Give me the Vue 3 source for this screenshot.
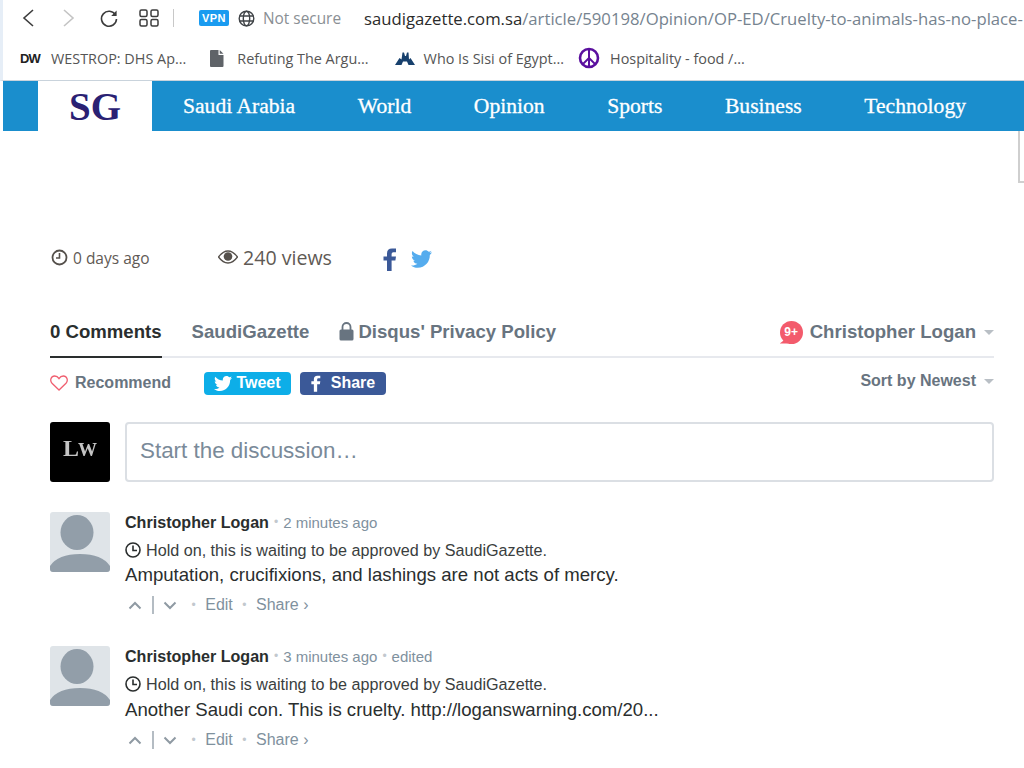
<template>
  <div class="page">
    <div class="toolbar">
      <button class="nav-btn back">
        <svg width="16" height="20" viewBox="0 0 16 20"><path d="M12 2 L3 10 L12 18" fill="none" stroke="#3c3c3c" stroke-width="1.6" /></svg>
      </button>
      <button class="nav-btn forward">
        <svg width="16" height="20" viewBox="0 0 16 20"><path d="M4 2 L13 10 L4 18" fill="none" stroke="#c4c4c4" stroke-width="1.6" /></svg>
      </button>
      <button class="nav-btn reload">
        <svg width="20" height="20" viewBox="0 0 20 20">
          <path d="M16.5 7 A7.5 7.5 0 1 0 17.5 11" fill="none" stroke="#3c3c3c" stroke-width="1.6" />
          <path d="M17.6 2.6 V8 H12.2 Z" fill="#3c3c3c" />
        </svg>
      </button>
      <button class="nav-btn tabs">
        <svg width="20" height="18" viewBox="0 0 20 18" fill="none" stroke="#3c3c3c" stroke-width="1.5">
          <rect x="1" y="1" width="7" height="6.5" rx="1.5" />
          <rect x="12" y="1" width="7" height="6.5" rx="1.5" />
          <rect x="1" y="10.5" width="7" height="6.5" rx="1.5" />
          <rect x="12" y="10.5" width="7" height="6.5" rx="1.5" />
        </svg>
      </button>
      <span class="toolbar-sep"></span>
      <span class="vpn">VPN</span>
      <svg class="globe" width="17" height="17" viewBox="0 0 17 17" fill="none" stroke="#3f4347" stroke-width="1.4">
        <circle cx="8.5" cy="8.5" r="7.3" />
        <ellipse cx="8.5" cy="8.5" rx="3.2" ry="7.3" />
        <path d="M1.5 6 H15.5 M1.5 11 H15.5" />
      </svg>
      <span class="not-secure">Not secure</span>
      <span class="url"><b>saudigazette.com.sa</b>/article/590198/Opinion/OP-ED/Cruelty-to-animals-has-no-place-</span>
    </div>

    <div class="bookmarks">
      <div class="bookmark dw">
        <span class="dw-logo">DW</span>
        <span>WESTROP: DHS Ap...</span>
      </div>
      <div class="bookmark doc">
        <svg width="14" height="17" viewBox="0 0 14 17"><path d="M1 0 H8.5 V5 H13.5 V16 Q13.5 17 12.5 17 H1 Q0 17 0 16 V1 Q0 0 1 0 Z M9.7 0 L13.5 3.8 H9.7 Z" fill="#5f6368" /></svg>
        <span>Refuting The Argu...</span>
      </div>
      <div class="bookmark who">
        <svg width="20" height="13" viewBox="0 0 20 13"><path d="M0 13 L4.5 6 L6.5 7.5 L7.5 0.5 H9 L10 4 L11 4 L12 0.5 H13.5 L14 7.5 L15.5 6 L20 13 H13.5 L12 9.5 H8 L6.5 13 Z" fill="#17406d" /></svg>
        <span>Who Is Sisi of Egypt...</span>
      </div>
      <div class="bookmark peace">
        <svg width="22" height="22" viewBox="0 0 22 22" fill="none" stroke="#5a0f9e" stroke-width="2.6">
          <circle cx="11" cy="11" r="9" />
          <path d="M11 2 V20 M11 11 L4.6 17.4 M11 11 L17.4 17.4" stroke-width="2" />
        </svg>
        <span>Hospitality - food /...</span>
      </div>
    </div>

    <nav class="site-nav">
      <div class="logo">SG</div>
      <div class="site-links">
        <a v-for="link in links" :key="link">{{ link }}</a>
      </div>
    </nav>
    <div class="corner-box"></div>

    <div class="article-meta">
      <div class="meta-days">
        <svg width="17" height="17" viewBox="0 0 17 17" fill="none" stroke="#55504b" stroke-width="1.8">
          <circle cx="8.5" cy="8.5" r="7" />
          <path d="M8.5 4 V9 H5" stroke-width="1.6" />
        </svg>
        <span>0 days ago</span>
      </div>
      <div class="meta-views">
        <svg width="20" height="14" viewBox="0 0 20 14">
          <path d="M0.5 7 Q5 1 10 1 Q15 1 19.5 7 Q15 13 10 13 Q5 13 0.5 7 Z" fill="none" stroke="#55504b" stroke-width="1.3" />
          <circle cx="10" cy="6.5" r="4.3" fill="#55504b" />
        </svg>
        <span>240 views</span>
      </div>
      <div class="meta-share">
        <svg width="14" height="23" viewBox="0 0 14 23"><path d="M4 23 V12.5 H0.5 V8.5 H4 V5.5 Q4 0.5 9 0.5 H13 V4.3 H10.3 Q8.6 4.3 8.6 6 V8.5 H13 L12.4 12.5 H8.6 V23 Z" fill="#3b5998" /></svg>
        <svg width="21" height="18" viewBox="0 0 24 20"><path :d="birdPath" fill="#55acee" /></svg>
      </div>
    </div>

    <div class="disqus">
      <div class="disqus-tabs">
        <div class="tab active">0 Comments</div>
        <div class="tab">SaudiGazette</div>
        <div class="tab privacy">
          <svg width="15" height="20" viewBox="0 0 15 20">
            <path d="M3.5 8 V5 A4 4 0 0 1 11.5 5 V8" fill="none" stroke="#687480" stroke-width="1.8" />
            <rect x="0.5" y="7.5" width="14" height="11" rx="1.5" fill="#687480" />
          </svg>
          <span>Disqus' Privacy Policy</span>
        </div>
        <div class="tab-user">
          <span class="badge">9+</span>
          <span>Christopher Logan</span>
          <span class="caret"></span>
        </div>
      </div>

      <div class="disqus-actions">
        <div class="recommend">
          <svg width="18" height="16" viewBox="0 0 18 16"><path d="M9 15 L2 8.2 C-0.5 5.5 1 1 4.7 1 C6.6 1 8 2 9 3.6 C10 2 11.4 1 13.3 1 C17 1 18.5 5.5 16 8.2 Z" fill="none" stroke="#f05f70" stroke-width="1.3" /></svg>
          <span>Recommend</span>
        </div>
        <div class="share-btn tweet">
          <svg width="18" height="15" viewBox="0 0 24 20"><path :d="birdPath" fill="#fff" /></svg>
          <span>Tweet</span>
        </div>
        <div class="share-btn fb">
          <svg width="10" height="17" viewBox="0 0 14 23"><path d="M4 23 V12.5 H0.5 V8.5 H4 V5.5 Q4 0.5 9 0.5 H13 V4.3 H10.3 Q8.6 4.3 8.6 6 V8.5 H13 L12.4 12.5 H8.6 V23 Z" fill="#fff" /></svg>
          <span>Share</span>
        </div>
        <div class="sort">
          <span>Sort by Newest</span>
          <span class="caret"></span>
        </div>
      </div>

      <div class="compose">
        <div class="lw-avatar"><span>L</span><span class="lw-w">W</span></div>
        <div class="compose-input">Start the discussion…</div>
      </div>

      <div v-for="comment in comments" :key="comment.time" class="comment">
        <div class="avatar">
          <svg width="60" height="60" viewBox="0 0 60 60">
            <ellipse cx="27" cy="20.5" rx="16.5" ry="17.5" fill="#929ea9" />
            <path d="M0 60 V54 Q8 42 30 42 Q52 42 60 54 V60 Z" fill="#929ea9" />
          </svg>
        </div>
        <div class="comment-body">
          <div class="comment-head">
            <span class="author">Christopher Logan</span>
            <span class="dot">•</span>
            <span class="time">{{ comment.time }}</span>
            <template v-if="comment.edited">
              <span class="dot">•</span>
              <span class="edited">edited</span>
            </template>
          </div>
          <div class="pending">
            <svg width="16" height="16" viewBox="0 0 16 16" fill="none" stroke="#2a2e2e" stroke-width="1.6">
              <circle cx="8" cy="8" r="7" />
              <path d="M8 3.5 V8.5 H12" />
            </svg>
            <span>Hold on, this is waiting to be approved by SaudiGazette.</span>
          </div>
          <div class="message">{{ comment.text }}</div>
          <div class="comment-foot">
            <svg width="14" height="9" viewBox="0 0 14 9"><path d="M1.5 7.5 L7 2 L12.5 7.5" fill="none" stroke="#8f9aa3" stroke-width="2" /></svg>
            <span class="vote-sep"></span>
            <svg width="14" height="9" viewBox="0 0 14 9"><path d="M1.5 1.5 L7 7 L12.5 1.5" fill="none" stroke="#8f9aa3" stroke-width="2" /></svg>
            <span class="dot first">•</span>
            <span>Edit</span>
            <span class="dot">•</span>
            <span>Share ›</span>
          </div>
        </div>
      </div>
    </div>
  </div>
</template>

<script setup>
const links = ['Saudi Arabia', 'World', 'Opinion', 'Sports', 'Business', 'Technology']

const birdPath = 'M24 2.4c-.9.4-1.8.7-2.8.8 1-.6 1.8-1.6 2.2-2.7-1 .6-2 1-3.1 1.2C19.3.7 18 0 16.6 0c-2.7 0-4.9 2.2-4.9 4.9 0 .4 0 .8.1 1.1C7.7 5.8 4.1 3.8 1.7.9 1.2 1.6 1 2.5 1 3.4c0 1.7.9 3.2 2.2 4.1-.8 0-1.6-.2-2.2-.6v.1c0 2.4 1.7 4.4 3.9 4.8-.4.1-.8.2-1.3.2-.3 0-.6 0-.9-.1.6 2 2.4 3.4 4.6 3.4-1.7 1.3-3.8 2.1-6.1 2.1-.4 0-.8 0-1.2-.1C2.2 18.9 4.8 20 7.5 20c9.1 0 14-7.5 14-14v-.6c1-.7 1.8-1.6 2.5-3z'

const comments = [
  { time: '2 minutes ago', edited: false, text: 'Amputation, crucifixions, and lashings are not acts of mercy.' },
  { time: '3 minutes ago', edited: true, text: 'Another Saudi con. This is cruelty. http://loganswarning.com/20...' }
]
</script>

<style scoped>
.page {
  position: relative;
  width: 1024px;
  height: 768px;
  overflow: hidden;
  background: #fff;
  font-family: "Liberation Sans", Arial, sans-serif;
}

.toolbar {
  display: flex;
  align-items: center;
  height: 36px;
  padding-left: 3px;
  white-space: nowrap;
  border-left: 3px solid #e6eef7;
  box-sizing: border-box;
}

.nav-btn {
  display: flex;
  align-items: center;
  justify-content: center;
  padding: 0;
  border: none;
  background: none;
}

.back { margin-left: 15px; }
.forward { margin-left: 23px; }
.reload { margin-left: 23px; }
.tabs { margin-left: 20px; }

.toolbar-sep {
  width: 1px;
  height: 18px;
  margin-left: 14px;
  background: #c8c8c8;
}

.vpn {
  margin-left: 25px;
  width: 30px;
  height: 16px;
  line-height: 16px;
  text-align: center;
  border-radius: 2px;
  background: #1a9bf0;
  color: #fff;
  font-size: 11px;
  font-weight: 700;
  letter-spacing: 0.5px;
}

.globe { margin-left: 9px; }

.not-secure {
  margin-left: 8px;
  font-family: "Open Sans", sans-serif;
  font-size: 15.4px;
  color: #8a8f94;
}

.url {
  margin-left: 23px;
  font-family: "Open Sans", sans-serif;
  font-size: 16.7px;
  color: #76838f;
}

.url b {
  font-weight: 400;
  color: #2b2b2b;
}

.bookmarks {
  display: flex;
  align-items: center;
  height: 44px;
  padding-left: 20px;
  border-left: 3px solid #e6eef7;
  border-bottom: 1px solid #c9d3dc;
  font-family: "Open Sans", sans-serif;
  font-size: 14.4px;
  color: #555;
  white-space: nowrap;
}

.bookmark {
  display: flex;
  align-items: center;
}

.dw { margin-left: -3px; }

.dw-logo {
  width: 31px;
  font-family: "Liberation Sans", sans-serif;
  font-size: 13px;
  font-weight: 700;
  letter-spacing: -1px;
  color: #222;
}

.doc { margin-left: 24px; }
.doc span { margin-left: 13px; }
.who { margin-left: 26px; }
.who span { margin-left: 9px; }
.peace { margin-left: 14px; }
.peace span { margin-left: 10px; }

.site-nav {
  display: flex;
  height: 50px;
  margin-left: 3px;
  padding-left: 35px;
  background: #1a8ecd;
}

.logo {
  width: 114px;
  line-height: 52px;
  text-align: center;
  background: #fff;
  font-family: "Liberation Serif", serif;
  font-size: 39px;
  font-weight: 700;
  color: #2a2173;
}

.site-links {
  display: flex;
  align-items: center;
  gap: 62.6px;
  padding-left: 31px;
  font-family: "Liberation Serif", serif;
  font-size: 21.6px;
  -webkit-text-stroke: 0.3px #fff;
  color: #fff;
  white-space: nowrap;
}

.corner-box {
  position: absolute;
  top: 131px;
  right: 0;
  width: 4px;
  height: 50px;
  border-left: 2px solid #cfcfcf;
  border-bottom: 2px solid #cfcfcf;
}

.article-meta {
  display: flex;
  align-items: center;
  height: 36px;
  margin-top: 110px;
  padding-left: 51px;
  font-family: "Open Sans", sans-serif;
  color: #5f5a55;
}

.meta-days {
  display: flex;
  align-items: center;
  gap: 5px;
  width: 167px;
  margin-top: -3px;
  font-size: 15.5px;
}

.meta-views {
  display: flex;
  align-items: center;
  gap: 5px;
  width: 165px;
  margin-top: -4px;
  font-size: 19.6px;
}

.meta-share {
  display: flex;
  align-items: center;
  gap: 14px;
}

.disqus {
  margin: 33px 30px 0 50px;
  color: #687480;
}

.disqus-tabs {
  display: flex;
  align-items: center;
  height: 46px;
  border-bottom: 2px solid #e7e9ee;
  font-size: 18.6px;
  font-weight: 700;
  white-space: nowrap;
}

.tab {
  display: flex;
  align-items: center;
  align-self: stretch;
  margin-right: 30px;
  padding-bottom: 2px;
}

.tab.active {
  color: #2a2e2e;
  box-sizing: content-box;
  margin-bottom: -2px;
  border-bottom: 2px solid #2a2e2e;
}

.privacy { gap: 4px; }

.tab-user {
  display: flex;
  align-items: center;
  margin-left: auto;
  gap: 7px;
  color: #687480;
  padding-bottom: 2px;
}

.badge {
  position: relative;
  width: 23px;
  height: 23px;
  line-height: 23px;
  text-align: center;
  border-radius: 50%;
  background: #f35b6c;
  color: #fff;
  font-size: 12px;
  font-weight: 700;
}

.badge::after {
  content: "";
  position: absolute;
  left: 0;
  bottom: 0;
  width: 8px;
  height: 6px;
  background: #f35b6c;
  clip-path: polygon(0 100%, 100% 0, 100% 100%);
}

.caret {
  width: 0;
  height: 0;
  margin-left: 1px;
  border-left: 5px solid transparent;
  border-right: 5px solid transparent;
  border-top: 5px solid #b9bfc5;
}

.disqus-actions {
  display: flex;
  align-items: center;
  height: 24px;
  margin-top: 13px;
  font-size: 16px;
  font-weight: 700;
}

.recommend {
  display: flex;
  align-items: center;
  gap: 7px;
  width: 154px;
  margin-top: -1px;
}

.share-btn {
  display: flex;
  align-items: center;
  justify-content: center;
  gap: 4px;
  width: 87px;
  height: 23px;
  border-radius: 4px;
  color: #fff;
  font-size: 16px;
}

.tweet {
  background: #0daee8;
  margin-right: 9px;
}

.fb {
  width: 86px;
  background: #3b5998;
  gap: 10px;
}

.sort {
  display: flex;
  align-items: center;
  gap: 7px;
  margin-left: auto;
  margin-top: -4px;
}

.compose {
  display: flex;
  gap: 15px;
  margin-top: 27px;
}

.lw-avatar {
  width: 60px;
  height: 60px;
  line-height: 53px;
  text-align: center;
  border-radius: 3px;
  background: #000;
  color: #c4c4c4;
  font-family: "Liberation Serif", serif;
  font-size: 24px;
  font-weight: 700;
  filter: blur(0.4px);
}

.lw-w {
  font-size: 19px;
  margin-left: -1px;
}

.compose-input {
  flex: 1;
  height: 60px;
  line-height: 54px;
  padding-left: 13px;
  box-sizing: border-box;
  border: 2px solid #dbdfe4;
  border-radius: 4px;
  color: #7a8a99;
  font-size: 22.4px;
}

.comment {
  display: flex;
  gap: 15px;
  margin-top: 30px;
  height: 105px;
}

.comment + .comment {
  margin-top: 29px;
}

.comment + .comment .message {
  margin-top: 3px;
}

.avatar {
  width: 60px;
  height: 60px;
  overflow: hidden;
  border-radius: 3px;
  background: #dfe4e8;
}

.comment-body {
  flex: 1;
  padding-top: 1px;
}

.comment-head {
  display: flex;
  align-items: center;
  height: 18px;
  gap: 5px;
  font-size: 15px;
  color: #7f919e;
}

.author {
  font-size: 16.1px;
  font-weight: 700;
  color: #2a2e2e;
}

.dot {
  color: #c2c8ce;
  font-size: 12px;
}

.pending {
  display: flex;
  align-items: center;
  gap: 5px;
  height: 22px;
  margin-top: 8px;
  font-size: 16.15px;
  color: #3a3e3e;
}

.message {
  margin-top: 2px;
  height: 24px;
  line-height: 24px;
  font-size: 18.6px;
  color: #2a2e2e;
}

.comment-foot {
  display: flex;
  align-items: center;
  height: 24px;
  margin-top: 6px;
  margin-left: 3px;
  gap: 9.5px;
  font-size: 16px;
  color: #7f919e;
}

.comment-foot .first {
  margin-left: 5px;
}

.vote-sep {
  width: 2px;
  height: 18px;
  background: #b4bcc3;
}
</style>

<style>
html, body {
  margin: 0;
  background: #fff;
}
</style>
